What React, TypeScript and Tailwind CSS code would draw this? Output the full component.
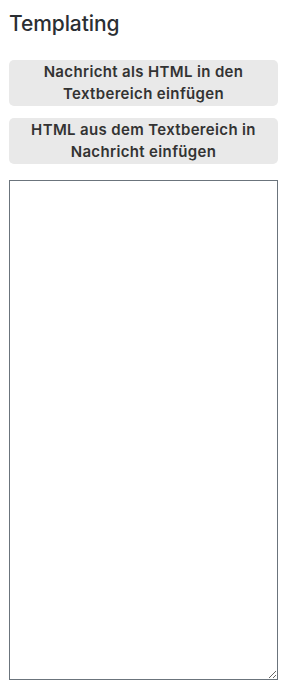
export default function App() {
  return (
    <div className="w-[286px] h-[684px] bg-white pl-[9px] pr-[8px] pt-[9px] flex flex-col" style={{ fontFamily: 'Inter, "Noto Sans", sans-serif' }}>
      <h2 className="text-[21px] leading-[30px] font-medium text-[#2b2f33] tracking-[-0.1px]">Templating</h2>
      <button className="mt-[21px] w-full h-[46px] rounded-[5px] bg-[#e9e9e9] text-[#333] text-[15px] leading-[22px] font-semibold tracking-[0.35px] text-center">
        Nachricht als HTML in den<br />Textbereich einfügen
      </button>
      <button className="mt-[12px] w-full h-[46px] rounded-[5px] bg-[#e9e9e9] text-[#333] text-[15px] leading-[22px] font-semibold tracking-[0.35px] text-center">
        HTML aus dem Textbereich in<br />Nachricht einfügen
      </button>
      <textarea className="mt-[16px] w-full h-[500px] border border-[#6b747c] bg-white resize-y block" />
    </div>
  );
}
